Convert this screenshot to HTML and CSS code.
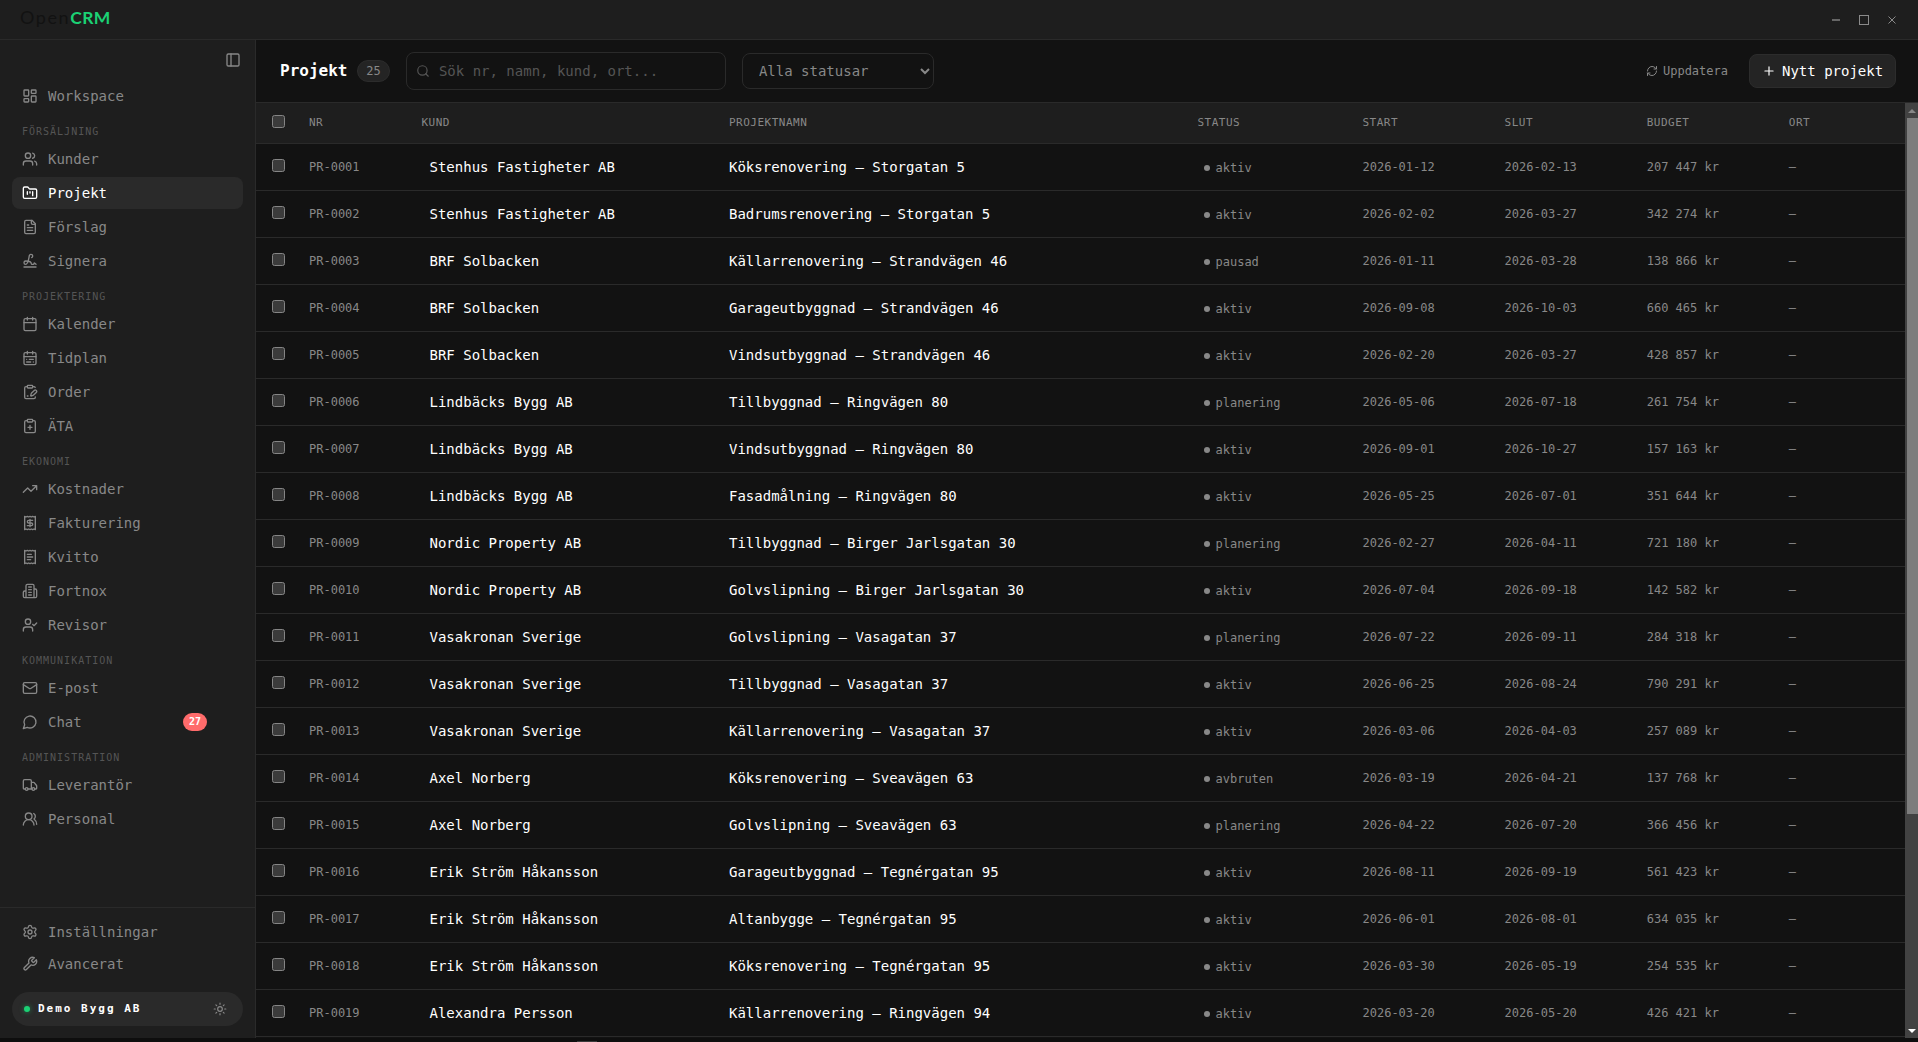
FILE: index.html
```html
<!DOCTYPE html>
<html lang="sv">
<head>
<meta charset="utf-8">
<title>OpenCRM – Projekt</title>
<link rel="stylesheet" href="styles.css">
</head>
<body>
<div class="app">
  <header class="titlebar">
    <div class="logo"><span class="logo-open">Open</span><span class="logo-crm">CRM</span></div>
    <div class="window-buttons">
      <svg width="10" height="10" viewBox="0 0 10 10"><path class="minimize" d="M1 5h8"/></svg>
      <svg width="10" height="10" viewBox="0 0 10 10"><rect x=".5" y=".5" width="9" height="9"/></svg>
      <svg width="10" height="10" viewBox="0 0 10 10"><path d="m1.500 1.500 7 7m0-7-7 7"/></svg>
    </div>
  </header>
  <div class="body">
    <aside class="sidebar">
      <div class="collapse"><svg class="icon" viewBox="0 0 24 24"><rect width="18" height="18" x="3" y="3" rx="2"/><path d="M9 3v18"/></svg></div>
      <nav class="nav" id="nav"></nav>
      <div class="sidebar-footer">
        <a class="foot-item"><svg class="icon" viewBox="0 0 24 24"><path d="M9.671 4.136a2.340 2.340 0 0 1 4.659 0 2.340 2.340 0 0 0 3.319 1.915 2.340 2.340 0 0 1 2.330 4.033 2.340 2.340 0 0 0 0 3.831 2.340 2.340 0 0 1-2.330 4.033 2.340 2.340 0 0 0-3.319 1.915 2.340 2.340 0 0 1-4.659 0 2.340 2.340 0 0 0-3.320-1.915 2.340 2.340 0 0 1-2.330-4.033 2.340 2.340 0 0 0 0-3.831A2.340 2.340 0 0 1 6.350 6.051a2.340 2.340 0 0 0 3.319-1.915"/><circle cx="12" cy="12" r="3"/></svg>Inställningar</a>
        <a class="foot-item"><svg class="icon" viewBox="0 0 24 24"><path d="M14.700 6.300a1 1 0 0 0 0 1.400l1.600 1.600a1 1 0 0 0 1.400 0l3.770-3.770a6 6 0 0 1-7.940 7.940l-6.910 6.910a2.120 2.120 0 0 1-3-3l6.910-6.910a6 6 0 0 1 7.940-7.940l-3.760 3.760z"/></svg>Avancerat</a>
        <div class="account">
          <span class="online"></span><span class="account-name">Demo Bygg AB</span>
          <svg class="icon sun" viewBox="0 0 24 24"><circle cx="12" cy="12" r="4"/><path d="M12 2v2M12 20v2M4.930 4.930l1.410 1.410M17.660 17.660l1.410 1.410M2 12h2M20 12h2M6.340 17.660l-1.410 1.410M19.070 4.930l-1.410 1.410"/></svg>
        </div>
      </div>
    </aside>
    <main class="main">
      <div class="toolbar">
        <h1>Projekt</h1><span class="count">25</span>
        <label class="search"><svg class="icon" viewBox="0 0 24 24"><circle cx="11" cy="11" r="8"/><path d="m21 21-4.340-4.340"/></svg><input type="text" placeholder="Sök nr, namn, kund, ort..."></label>
        <select class="status-filter"><option>Alla statusar</option></select>
        <a class="refresh"><svg class="icon" viewBox="0 0 24 24"><path d="M3 12a9 9 0 0 1 9-9 9.750 9.750 0 0 1 6.740 2.740L21 8"/><path d="M21 3v5h-5"/><path d="M21 12a9 9 0 0 1-9 9 9.750 9.750 0 0 1-6.740-2.740L3 16"/><path d="M8 16H3v5"/></svg>Uppdatera</a>
        <button class="new-project"><svg class="icon" viewBox="0 0 24 24"><path d="M5 12h14M12 5v14"/></svg>Nytt projekt</button>
      </div>
      <div class="table-area">
        <div class="table-scroll">
          <table>
            <colgroup><col class="c-check"><col class="c-nr"><col class="c-kund"><col class="c-namn"><col class="c-status"><col class="c-date"><col class="c-date"><col class="c-date"><col></colgroup>
            <thead><tr><th><i class="check"></i></th><th>Nr</th><th>Kund</th><th>Projektnamn</th><th>Status</th><th>Start</th><th>Slut</th><th>Budget</th><th>Ort</th></tr></thead>
            <tbody id="rows"></tbody>
          </table>
        </div>
        <div class="scrollbar"><span class="arrow up"></span><span class="thumb"></span><span class="arrow down"></span></div>
      </div>
    </main>
  </div>
  <div class="bottom-edge"><span class="handle"></span></div>
</div>
<script src="app.js"></script>
</body>
</html>
```
FILE: styles.css
```css
* { box-sizing: border-box; }
body { margin: 0; background: #0e0e0e; color: #fff; font: 14px/20px "DejaVu Sans Mono", monospace; overflow: hidden; }
.app { display: flex; flex-direction: column; width: 1918px; height: 1042px; overflow: hidden; }
svg { display: block; flex: none; }
.icon { width: 16px; height: 16px; fill: none; stroke: currentColor; stroke-width: 2; stroke-linecap: round; stroke-linejoin: round; }

.titlebar { display: flex; justify-content: space-between; height: 40px; padding: 0 21px 0 20px; background: #1e1e1e; border-bottom: 1px solid #2a2a2a; }
.logo { font: 18px/35px Lato, sans-serif; display: flex; }
.logo-open { color: #121212; letter-spacing: 1.600px; }
.logo-crm { color: #1bd174; font-size: 17.500px; font-weight: 700; letter-spacing: .3px; }
.window-buttons { display: flex; align-items: center; gap: 18px; }
.window-buttons svg { fill: none; stroke: #8a8a8a; }
.window-buttons .minimize { stroke: #666; stroke-width: 2; }

.body { display: flex; height: 998px; }
.sidebar { display: flex; flex-direction: column; width: 256px; flex: none; background: #1e1e1e; border-right: 1px solid #2a2a2a; color: #888; }
.collapse { display: flex; justify-content: flex-end; padding: 12px 14px 12px 0; }
.nav { flex: 1; padding: 0 12px; display: flex; flex-direction: column; }
.nav-label { height: 31px; padding: 14px 0 0 10px; font-size: 10px; line-height: 12px; letter-spacing: 1px; color: #555; }
.nav-group { display: flex; flex-direction: column; gap: 2px; }
.nav-item { display: flex; align-items: center; gap: 10px; height: 32px; padding: 0 10px; border-radius: 8px; }
.nav-item.active { background: #2a2a2a; color: #fff; }
.badge { margin: 0 26px 0 auto; width: 24px; height: 18px; border-radius: 9px; background: #ff6b6b; color: #fff; font-size: 10px; font-weight: 700; line-height: 17px; text-align: center; }
.sidebar-footer { border-top: 1px solid #2a2a2a; padding: 8px 12px 12px; }
.foot-item { display: flex; align-items: center; gap: 10px; height: 32px; padding: 0 10px; }
.account { display: flex; align-items: center; height: 34px; margin-top: 12px; padding: 0 16px 0 12px; border-radius: 17px; background: #2a2a2a; }
.online { width: 6px; height: 6px; border-radius: 50%; background: #1bd174; box-shadow: 0 0 5px #1bd17488; }
.account-name { flex: 1; margin-left: 8px; font-size: 11px; font-weight: 700; letter-spacing: 2px; line-height: 16px; color: #fff; }
.sun { width: 14px; height: 14px; }

.main { flex: 1; min-width: 0; display: flex; flex-direction: column; background: #121212; }
.toolbar { display: flex; align-items: center; height: 63px; padding: 0 22px 0 24px; border-bottom: 1px solid #2a2a2a; }
h1 { margin: 0; font-size: 16px; line-height: 22px; }
.count { margin-left: 9.500px; width: 33px; height: 22px; border: 1px solid #2c2c2c; border-radius: 11px; background: #242424; color: #888; font-size: 12px; line-height: 21px; text-align: center; }
.search { display: flex; align-items: center; width: 320px; height: 38px; margin-left: 16px; padding: 0 9px; border: 1px solid #2a2a2a; border-radius: 8px; color: #555; }
.search .icon { width: 14px; height: 14px; }
.search input { flex: 1; min-width: 0; margin-left: 9px; padding: 0; border: 0; outline: 0; background: none; color: #888; font: inherit; }
.search input::placeholder { color: #555; }
.status-filter { width: 192px; height: 36px; margin-left: 16px; padding: 0 0 0 12px; border: 1px solid #2a2a2a; border-radius: 8px; background: #121212; color: #888; font: inherit; color-scheme: dark; }
.refresh { display: flex; align-items: center; gap: 5px; margin-left: auto; color: #888; font-size: 12px; }
.refresh .icon { width: 12px; height: 12px; }
.new-project { display: flex; align-items: center; gap: 6px; height: 34px; width: 147px; margin-left: 21px; padding: 0 0 0 12px; border: 1px solid #2c2c2c; border-radius: 8px; background: #242424; color: #fff; font: inherit; }
.new-project .icon { width: 14px; height: 14px; }

.table-area { display: flex; height: 935px; }
.table-scroll { width: 1649px; overflow: hidden; }
table { width: 1649px; table-layout: fixed; border-collapse: separate; border-spacing: 0; }
.c-check { width: 53px; }
.c-nr { width: 112.500px; }
.c-kund { width: 307.500px; }
.c-namn { width: 468.500px; }
.c-status { width: 165px; }
.c-date { width: 142.100px; }
th, td { padding: 0; border-bottom: 1px solid #2a2a2a; text-align: left; vertical-align: middle; white-space: nowrap; }
th { height: 41px; background: #1e1e1e; color: #888; font-size: 11px; font-weight: 400; letter-spacing: .5px; line-height: 16px; text-transform: uppercase; }
td { height: 47px; color: #888; font-size: 12px; }
.check { display: block; width: 13px; height: 13px; margin: -3px 0 0 16px; border: 1px solid #858585; border-radius: 2.500px; background: #3b3b3b; }
td.kund, td.namn { color: #fff; font-size: 14px; }
td.kund { padding-left: 8px; }
.status { display: flex; align-items: center; padding: 2px 0 0 6.500px; gap: 5.500px; }
.status::before { content: ""; width: 6px; height: 6px; border-radius: 50%; background: #888; }
.scrollbar { width: 13px; display: flex; flex-direction: column; background: #424242; }
.thumb { height: 696px; margin-left: 2px; background: #7d7d7d; }
.arrow { height: 15px; display: flex; align-items: center; justify-content: center; padding-left: 1px; }
.arrow::before { content: ""; border: 4px solid transparent; }
.up::before { border-top: 0; border-bottom-color: #888; }
.down { margin-top: auto; }
.down::before { border-bottom: 0; border-top-color: #fff; }
.bottom-edge { height: 4px; background: #0e0e0e; display: flex; align-items: flex-end; padding-left: 577px; }
.handle { width: 20px; height: 1px; background: #3a3a3a; }
```
FILE: app.js
```js
const icons = {
  workspace: '<rect width="7" height="9" x="3" y="3" rx="1"/><rect width="7" height="5" x="14" y="3" rx="1"/><rect width="7" height="9" x="14" y="12" rx="1"/><rect width="7" height="5" x="3" y="16" rx="1"/>',
  users: '<path d="M16 21v-2a4 4 0 0 0-4-4H6a4 4 0 0 0-4 4v2"/><circle cx="9" cy="7" r="4"/><path d="M22 21v-2a4 4 0 0 0-3-3.870M16 3.130a4 4 0 0 1 0 7.750"/>',
  folder: '<path d="M4 20h16a2 2 0 0 0 2-2V8a2 2 0 0 0-2-2h-7.930a2 2 0 0 1-1.660-.9l-.82-1.200A2 2 0 0 0 7.930 3H4a2 2 0 0 0-2 2v13c0 1.100.9 2 2 2Z"/><path d="M8 10v4M12 10v2M16 10v6"/>',
  file: '<path d="M15 2H6a2 2 0 0 0-2 2v16a2 2 0 0 0 2 2h12a2 2 0 0 0 2-2V7Z"/><path d="M14 2v4a2 2 0 0 0 2 2h4M10 9H8M16 13H8M16 17H8"/>',
  sign: '<path d="m21 17-2.156-1.868A.5.5 0 0 0 18 15.500v.5a1 1 0 0 1-1 1h-2a1 1 0 0 1-1-1c0-2.545-3.991-3.970-8.500-4a1 1 0 0 0 0 5c4.153 0 4.745-11.295 5.708-13.500a2.500 2.500 0 1 1 3.310 3.284"/><path d="M3 21h18"/>',
  calendar: '<path d="M8 2v4M16 2v4"/><rect width="18" height="18" x="3" y="4" rx="2"/><path d="M3 10h18"/>',
  plan: '<path d="M8 2v4M16 2v4"/><rect width="18" height="18" x="3" y="4" rx="2"/><path d="M3 10h18M17 14h-6M13 18H7M7 14h.01M17 18h.01"/>',
  order: '<rect width="8" height="4" x="8" y="2" rx="1"/><path d="M16 4h2a2 2 0 0 1 1.730 1M8 4H6a2 2 0 0 0-2 2v14a2 2 0 0 0 2 2h12a2 2 0 0 0 2-2v-.5M8 18h1M21.378 12.626a1 1 0 0 0-3.004-3.004l-4.010 4.012a2 2 0 0 0-.506.854l-.837 2.870a.5.5 0 0 0 .62.620l2.870-.837a2 2 0 0 0 .854-.506z"/>',
  ata: '<rect width="8" height="4" x="8" y="2" rx="1"/><path d="M16 4h2a2 2 0 0 1 2 2v14a2 2 0 0 1-2 2H6a2 2 0 0 1-2-2V6a2 2 0 0 1 2-2h2M9 14h6M12 17v-6"/>',
  trend: '<path d="M22 7 13.500 15.500 8.500 10.500 2 17M16 7h6v6"/>',
  invoice: '<path d="M4 2v20l2-1 2 1 2-1 2 1 2-1 2 1 2-1 2 1V2l-2 1-2-1-2 1-2-1-2 1-2-1-2 1Z"/><path d="M16 8h-6a2 2 0 1 0 0 4h4a2 2 0 1 1 0 4H8M12 17.500v-11"/>',
  receipt: '<path d="M4 2v20l2-1 2 1 2-1 2 1 2-1 2 1 2-1 2 1V2l-2 1-2-1-2 1-2-1-2 1-2-1-2 1Z"/><path d="M14 8H8M16 12H8M13 16H8"/>',
  building: '<path d="M6 22V4a2 2 0 0 1 2-2h8a2 2 0 0 1 2 2v18ZM6 12H4a2 2 0 0 0-2 2v6a2 2 0 0 0 2 2h2M18 9h2a2 2 0 0 1 2 2v9a2 2 0 0 1-2 2h-2M10 6h4M10 10h4M10 14h4M10 18h4"/>',
  usercheck: '<path d="m16 11 2 2 4-4M16 21v-2a4 4 0 0 0-4-4H6a4 4 0 0 0-4 4v2"/><circle cx="9" cy="7" r="4"/>',
  mail: '<rect width="20" height="16" x="2" y="4" rx="2"/><path d="m22 7-8.970 5.700a1.940 1.940 0 0 1-2.060 0L2 7"/>',
  chat: '<path d="M7.900 20A9 9 0 1 0 4 16.100L2 22Z"/>',
  truck: '<path d="M14 18V6a2 2 0 0 0-2-2H4a2 2 0 0 0-2 2v11a1 1 0 0 0 1 1h2M15 18H9M19 18h2a1 1 0 0 0 1-1v-3.650a1 1 0 0 0-.22-.624l-3.480-4.350A1 1 0 0 0 17.520 8H14"/><circle cx="17" cy="18" r="2"/><circle cx="7" cy="18" r="2"/>',
  people: '<path d="M18 21a8 8 0 0 0-16 0"/><circle cx="10" cy="8" r="5"/><path d="M22 20c0-3.370-2-6.500-4-8a5 5 0 0 0-.45-8.300"/>'
};
const groups = [
  ['', ['workspace', 'Workspace']],
  ['FÖRSÄLJNING', ['users', 'Kunder'], ['folder', 'Projekt'], ['file', 'Förslag'], ['sign', 'Signera']],
  ['PROJEKTERING', ['calendar', 'Kalender'], ['plan', 'Tidplan'], ['order', 'Order'], ['ata', 'ÄTA']],
  ['EKONOMI', ['trend', 'Kostnader'], ['invoice', 'Fakturering'], ['receipt', 'Kvitto'], ['building', 'Fortnox'], ['usercheck', 'Revisor']],
  ['KOMMUNIKATION', ['mail', 'E-post'], ['chat', 'Chat', 27]],
  ['ADMINISTRATION', ['truck', 'Leverantör'], ['people', 'Personal']]
];
document.getElementById('nav').innerHTML = groups.map(([label, ...items]) =>
  (label ? `<div class="nav-label">${label}</div>` : '') + '<div class="nav-group">' +
  items.map(([icon, text, badge]) =>
    `<a class="nav-item${text === 'Projekt' ? ' active' : ''}"><svg class="icon" viewBox="0 0 24 24">${icons[icon]}</svg>${text}${badge ? `<span class="badge">${badge}</span>` : ''}</a>`
  ).join('') + '</div>').join('');

const projects = `Stenhus Fastigheter AB|Köksrenovering – Storgatan 5|aktiv|2026-01-12|2026-02-13|207 447
Stenhus Fastigheter AB|Badrumsrenovering – Storgatan 5|aktiv|2026-02-02|2026-03-27|342 274
BRF Solbacken|Källarrenovering – Strandvägen 46|pausad|2026-01-11|2026-03-28|138 866
BRF Solbacken|Garageutbyggnad – Strandvägen 46|aktiv|2026-09-08|2026-10-03|660 465
BRF Solbacken|Vindsutbyggnad – Strandvägen 46|aktiv|2026-02-20|2026-03-27|428 857
Lindbäcks Bygg AB|Tillbyggnad – Ringvägen 80|planering|2026-05-06|2026-07-18|261 754
Lindbäcks Bygg AB|Vindsutbyggnad – Ringvägen 80|aktiv|2026-09-01|2026-10-27|157 163
Lindbäcks Bygg AB|Fasadmålning – Ringvägen 80|aktiv|2026-05-25|2026-07-01|351 644
Nordic Property AB|Tillbyggnad – Birger Jarlsgatan 30|planering|2026-02-27|2026-04-11|721 180
Nordic Property AB|Golvslipning – Birger Jarlsgatan 30|aktiv|2026-07-04|2026-09-18|142 582
Vasakronan Sverige|Golvslipning – Vasagatan 37|planering|2026-07-22|2026-09-11|284 318
Vasakronan Sverige|Tillbyggnad – Vasagatan 37|aktiv|2026-06-25|2026-08-24|790 291
Vasakronan Sverige|Källarrenovering – Vasagatan 37|aktiv|2026-03-06|2026-04-03|257 089
Axel Norberg|Köksrenovering – Sveavägen 63|avbruten|2026-03-19|2026-04-21|137 768
Axel Norberg|Golvslipning – Sveavägen 63|planering|2026-04-22|2026-07-20|366 456
Erik Ström Håkansson|Garageutbyggnad – Tegnérgatan 95|aktiv|2026-08-11|2026-09-19|561 423
Erik Ström Håkansson|Altanbygge – Tegnérgatan 95|aktiv|2026-06-01|2026-08-01|634 035
Erik Ström Håkansson|Köksrenovering – Tegnérgatan 95|aktiv|2026-03-30|2026-05-19|254 535
Alexandra Persson|Källarrenovering – Ringvägen 94|aktiv|2026-03-20|2026-05-20|426 421`.split('\n');
document.getElementById('rows').innerHTML = projects.map((line, i) => {
  const [kund, namn, status, start, slut, budget] = line.split('|');
  return `<tr><td><i class="check"></i></td><td>PR-${String(i + 1).padStart(4, '0')}</td><td class="kund">${kund}</td><td class="namn">${namn}</td><td><span class="status">${status}</span></td><td>${start}</td><td>${slut}</td><td>${budget} kr</td><td>–</td></tr>`;
}).join('');
```
